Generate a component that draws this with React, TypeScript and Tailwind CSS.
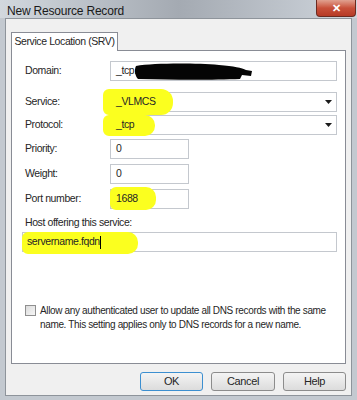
import React from 'react';

const font = { fontFamily: '"Liberation Sans", Arial, sans-serif' };

const Mark = ({ className }: { className: string }) => (
  <span className={`absolute bg-[#fbff1f] rounded-[6px] ${className}`} />
);

const Arrow = () => (
  <svg width="7" height="4" viewBox="0 0 7 4" className="ml-auto mr-[4px]">
    <path d="M0 0h7L3.5 4z" fill="#1b1b1b" />
  </svg>
);

const Field = ({
  label,
  children,
  className = '',
}: {
  label: string;
  children: React.ReactNode;
  className?: string;
}) => (
  <div className={`flex items-center ${className}`}>
    <span className="w-[85px] shrink-0">{label}</span>
    {children}
  </div>
);

const Btn = ({ text, primary, w }: { text: string; primary?: boolean; w: string }) => (
  <button
    className={`${w} h-[19px] rounded-[3px] border text-[11px] leading-none bg-gradient-to-b from-[#f4f4f4] to-[#dcdcdc] ${
      primary ? 'border-[#3c8fd0]' : 'border-[#8c8c8c]'
    }`}
  >
    {text}
  </button>
);

export default function App() {
  return (
    <div
      className="w-[357px] h-[400px] bg-[#c3c9d0] flex flex-col text-[10.5px] tracking-[-0.4px] text-[#262626] overflow-hidden"
      style={font}
    >
      {/* title bar */}
      <div className="h-[18px] flex items-start relative bg-gradient-to-r from-[#d2d8de] via-[#a4aab2] to-[#cfd5dc]">
        <span className="pl-[7px] pt-[4px] text-[12px] leading-[14px] text-[#1a1a1a] tracking-[-0.2px]">New Resource Record</span>
        <div className="ml-auto mr-[1px] w-[40px] h-[17px] rounded-b-[4px] border border-t-0 border-[#6b2a20] bg-gradient-to-b from-[#e0a090] via-[#c8503a] to-[#b63a26] flex items-center justify-center text-white font-bold text-[11px]">
          ✕
        </div>
      </div>

      {/* client area */}
      <div className="mx-[5px] mb-[4px] flex-1 bg-[#f0f0f0] border border-[#8e949b] flex flex-col px-[5px]">
        {/* tab */}
        <div className="mt-[12px] flex">
          <div className="w-[107px] h-[19px] bg-white border border-b-0 border-[#898c95] flex items-center justify-center whitespace-nowrap relative top-[1px] z-10">
            Service Location (SRV)
          </div>
        </div>
        <div className="h-[314px] bg-white border border-[#898c95] pl-[13px] pr-[8px] pt-[10px] flex flex-col">
          <Field label="Domain:">
            <div className="relative w-[227px] h-[20px] border border-[#c4c8ce] flex items-center pl-[5px]">
              <span>_tcp.</span>
              <svg className="absolute left-[23px] top-[0px]" width="120" height="19" viewBox="0 0 120 19">
                <path
                  d="M2 4 C20 1 60 1 85 3 C100 4 108 6 112 8 L118 9 L117 14 L108 13 L106 17 C80 18 40 18 4 17 C1 14 0 8 2 4 Z"
                  fill="#050505"
                />
              </svg>
            </div>
          </Field>

          <Field label="Service:" className="mt-[11px]">
            <div className="relative w-[227px] h-[20px] border border-[#c4c8ce] flex items-center pl-[5px]">
              <Mark className="-left-[8px] -top-[4px] w-[70px] h-[26px] rounded-r-[12px]" />
              <span className="relative">_VLMCS</span>
              <Arrow />
            </div>
          </Field>

          <Field label="Protocol:" className="mt-[3px]">
            <div className="relative w-[227px] h-[20px] border border-[#c4c8ce] flex items-center pl-[5px]">
              <Mark className="-left-[8px] -top-[1px] w-[52px] h-[21px] rounded-r-[10px]" />
              <span className="relative">_tcp</span>
              <Arrow />
            </div>
          </Field>

          <Field label="Priority:" className="mt-[4px]">
            <div className="w-[79px] h-[20px] border border-[#c4c8ce] flex items-center pl-[5px]">0</div>
          </Field>

          <Field label="Weight:" className="mt-[5px]">
            <div className="w-[79px] h-[20px] border border-[#c4c8ce] flex items-center pl-[5px]">0</div>
          </Field>

          <Field label="Port number:" className="mt-[5px]">
            <div className="relative w-[79px] h-[20px] border border-[#c4c8ce] flex items-center pl-[5px]">
              <Mark className="-left-[1px] -top-[3px] w-[46px] h-[23px] rounded-r-[10px]" />
              <span className="relative">1688</span>
            </div>
          </Field>

          <div className="mt-[6px] leading-[15px]">Host offering this service:</div>
          <div className="relative mt-[2px] -ml-[3px] w-[315px] h-[20px] border border-[#c4c8ce] flex items-center pl-[4px]">
            <Mark className="-left-[1px] -top-[1px] w-[116px] h-[22px] rounded-r-[10px]" />
            <span className="relative">servername.fqdn</span>
            <span className="relative w-[1px] h-[13px] bg-black" />
          </div>

          <div className="mt-[52px] flex items-start gap-[4px] leading-[14px] text-[10px] tracking-[-0.35px] whitespace-nowrap">
            <span className="mt-[1px] w-[11px] h-[11px] shrink-0 border border-[#8f8f8f] bg-gradient-to-br from-[#dcdcdc] to-[#f6f6f6]" />
            <span>
              Allow any authenticated user to update all DNS records with the same
              <br />
              name. This setting applies only to DNS records for a new name.
            </span>
          </div>
        </div>

        {/* buttons */}
        <div className="mt-[8px] flex justify-end gap-[8px]">
          <Btn text="OK" primary w="w-[63px]" />
          <Btn text="Cancel" w="w-[64px]" />
          <Btn text="Help" w="w-[63px]" />
        </div>
      </div>
    </div>
  );
}
